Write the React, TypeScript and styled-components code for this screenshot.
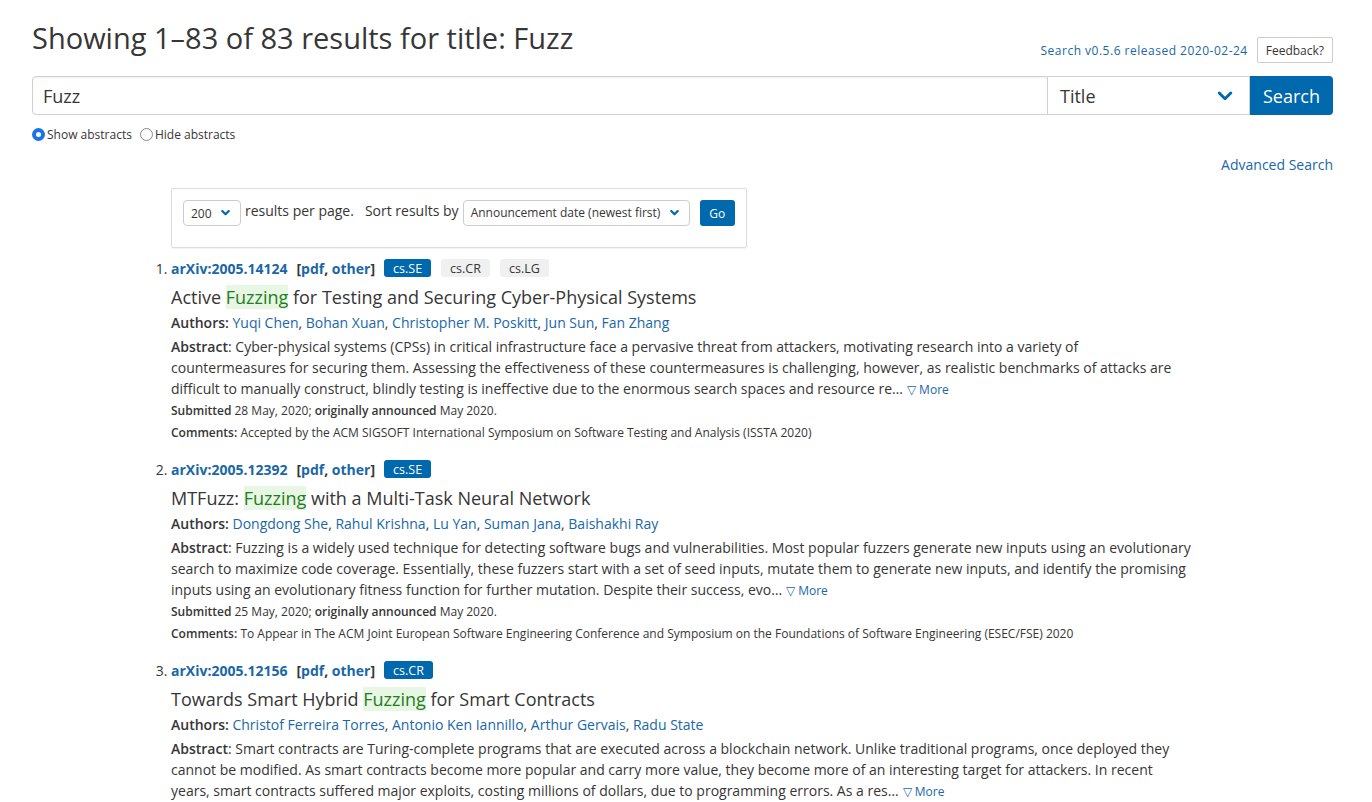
import React from 'react';
import styled, { createGlobalStyle } from 'styled-components';

const Global = createGlobalStyle`
  html, body {
    margin: 0;
    padding: 0;
    background: #fff;
  }
  body {
    font-family: "Open Sans", "Liberation Sans", sans-serif;
    color: #363636;
  }
`;

const BLUE = '#0068ac';
const LINK = '#1a67a8';

interface Tag {
  label: string;
  primary?: boolean;
}

interface Result {
  id: string;
  tags: Tag[];
  titleBefore: string;
  titleAfter: string;
  authors: string[];
  abstract: string;
  submitted: string;
  announced: string;
  comments: string;
}

const results: Result[] = [
  {
    id: '2005.14124',
    tags: [{ label: 'cs.SE', primary: true }, { label: 'cs.CR' }, { label: 'cs.LG' }],
    titleBefore: 'Active ',
    titleAfter: ' for Testing and Securing Cyber-Physical Systems',
    authors: ['Yuqi Chen', 'Bohan Xuan', 'Christopher M. Poskitt', 'Jun Sun', 'Fan Zhang'],
    abstract:
      'Cyber-physical systems (CPSs) in critical infrastructure face a pervasive threat from attackers, motivating research into a variety of countermeasures for securing them. Assessing the effectiveness of these countermeasures is challenging, however, as realistic benchmarks of attacks are difficult to manually construct, blindly testing is ineffective due to the enormous search spaces and resource re…',
    submitted: '28 May, 2020;',
    announced: 'May 2020.',
    comments: 'Accepted by the ACM SIGSOFT International Symposium on Software Testing and Analysis (ISSTA 2020)',
  },
  {
    id: '2005.12392',
    tags: [{ label: 'cs.SE', primary: true }],
    titleBefore: 'MTFuzz: ',
    titleAfter: ' with a Multi-Task Neural Network',
    authors: ['Dongdong She', 'Rahul Krishna', 'Lu Yan', 'Suman Jana', 'Baishakhi Ray'],
    abstract:
      'Fuzzing is a widely used technique for detecting software bugs and vulnerabilities. Most popular fuzzers generate new inputs using an evolutionary search to maximize code coverage. Essentially, these fuzzers start with a set of seed inputs, mutate them to generate new inputs, and identify the promising inputs using an evolutionary fitness function for further mutation. Despite their success, evo…',
    submitted: '25 May, 2020;',
    announced: 'May 2020.',
    comments:
      'To Appear in The ACM Joint European Software Engineering Conference and Symposium on the Foundations of Software Engineering (ESEC/FSE) 2020',
  },
  {
    id: '2005.12156',
    tags: [{ label: 'cs.CR', primary: true }],
    titleBefore: 'Towards Smart Hybrid ',
    titleAfter: ' for Smart Contracts',
    authors: ['Christof Ferreira Torres', 'Antonio Ken Iannillo', 'Arthur Gervais', 'Radu State'],
    abstract:
      'Smart contracts are Turing-complete programs that are executed across a blockchain network. Unlike traditional programs, once deployed they cannot be modified. As smart contracts become more popular and carry more value, they become more of an interesting target for attackers. In recent years, smart contracts suffered major exploits, costing millions of dollars, due to programming errors. As a res…',
    submitted: '',
    announced: '',
    comments: '',
  },
];

const Page = styled.div`
  padding: 18px 39px 0 32px;
`;

const Header = styled.header`
  display: flex;
  justify-content: space-between;
  align-items: flex-start;
`;

const Heading = styled.h1`
  margin: 0;
  font-size: 29px;
  line-height: 40px;
  font-weight: 400;
  color: #363636;
`;

const HeaderRight = styled.div`
  display: flex;
  align-items: center;
  gap: 9px;
  margin-top: 19px;
`;

const Version = styled.a`
  font-size: 12px;
  color: ${LINK};
  letter-spacing: 0.5px;
`;

const Feedback = styled.button`
  font-family: inherit;
  font-size: 12px;
  height: 26px;
  padding: 0 8px;
  background: #fff;
  color: #363636;
  border: 1px solid #ccc;
  border-radius: 2px;
`;

const SearchRow = styled.div`
  display: flex;
  margin-top: 13px;
  height: 39px;
`;

const SearchInput = styled.div`
  flex: 1;
  display: flex;
  align-items: center;
  padding-left: 10px;
  font-size: 18px;
  color: #363636;
  border: 1px solid #d0d0d0;
  border-radius: 4px 0 0 4px;
  box-shadow: inset 0 1px 2px rgba(0, 0, 0, 0.06);
`;

const FieldSelect = styled.div`
  width: 202px;
  box-sizing: border-box;
  display: flex;
  align-items: center;
  justify-content: space-between;
  padding: 0 16px 0 12px;
  font-size: 18px;
  border: 1px solid #d0d0d0;
  border-left: none;
`;

const SearchButton = styled.button`
  width: 83px;
  font-family: inherit;
  font-size: 18px;
  color: #fff;
  background: ${BLUE};
  border: none;
  border-radius: 0 4px 4px 0;
`;

const RadioRow = styled.div`
  display: flex;
  align-items: center;
  margin-top: 11px;
  font-size: 12px;
  color: #363636;
`;

const RadioLabel = styled.label`
  display: flex;
  align-items: center;
  gap: 2px;
  margin-right: 8px;
`;

const RadioDot = styled.span<{ $checked?: boolean }>`
  width: 13px;
  height: 13px;
  box-sizing: border-box;
  border-radius: 50%;
  border: ${(p) => (p.$checked ? '4px solid #1a73e8' : '1px solid #8a8a8a')};
  background: #fff;
`;

const AdvancedRow = styled.div`
  display: flex;
  justify-content: flex-end;
  margin-top: 12px;
  font-size: 14px;
  line-height: 20px;
`;

const Link = styled.a<{ $strong?: boolean }>`
  color: ${LINK};
  text-decoration: none;
  font-weight: ${(p) => (p.$strong ? 700 : 400)};
`;

const Content = styled.div`
  margin-left: 139px;
  width: 1022px;
`;

const ControlsBox = styled.div`
  margin-top: 13px;
  width: 576px;
  box-sizing: border-box;
  padding: 11px 11px 21px;
  border: 1px solid #dcdcdc;
  border-radius: 2px;
  box-shadow: 0 1px 2px rgba(0, 0, 0, 0.06);
  display: flex;
  align-items: flex-start;
  font-size: 14px;
  white-space: nowrap;
`;

const SmallSelect = styled.div<{ $width: number }>`
  width: ${(p) => p.$width}px;
  height: 26px;
  box-sizing: border-box;
  display: flex;
  align-items: center;
  justify-content: space-between;
  padding: 0 10px 0 7px;
  font-size: 12px;
  border: 1px solid #ccc;
  border-radius: 4px;
`;

const BoxText = styled.span<{ $gap: number }>`
  margin-left: ${(p) => p.$gap}px;
  line-height: 22px;
  flex-shrink: 0;
`;

const GoButton = styled.button`
  margin-left: 10px;
  width: 36px;
  height: 26px;
  font-family: inherit;
  font-size: 12px;
  color: #fff;
  background: ${BLUE};
  border: none;
  border-radius: 3px;
`;

const List = styled.ol`
  margin: 9px 0 0;
  padding: 0;
  list-style-position: outside;
  font-size: 14px;

  li::marker {
    color: #363636;
  }
`;

const Item = styled.li`
  margin-bottom: 14px;
`;

const ItemHead = styled.div`
  display: flex;
  align-items: center;
  height: 22px;
  font-weight: 700;
`;

const Bracket = styled.span`
  margin-left: 9px;
  margin-right: 9px;
`;

const TagChip = styled.span<{ $primary?: boolean }>`
  margin-right: 10px;
  height: 18px;
  padding: 0 9px;
  display: inline-flex;
  align-items: center;
  font-size: 12.5px;
  font-weight: 400;
  border-radius: 3px;
  color: ${(p) => (p.$primary ? '#fff' : '#363636')};
  background: ${(p) => (p.$primary ? BLUE : '#f0f0f0')};
`;

const Title = styled.p`
  margin: 6px 0 0;
  font-size: 18px;
  line-height: 24px;
  color: #363636;
`;

const Highlight = styled.span`
  background: #e8f6e4;
  color: #1f7d22;
`;

const Authors = styled.p`
  margin: 3px 0 0;
  line-height: 21px;
`;

const Label = styled.span`
  font-weight: 600;
`;

const Abstract = styled.p`
  margin: 3px 0 0;
  line-height: 21px;
`;

const More = styled.a`
  font-size: 12px;
  color: ${LINK};
  margin-left: 4px;
`;

const Meta = styled.p`
  margin: 0;
  font-size: 12px;
  line-height: 22px;
`;

function Chevron ({ size = 16, stroke = 3 }: { size?: number; stroke?: number }) {
  return (
    <svg width={size} height={size * 0.6} viewBox='0 0 16 10'>
      <polyline
        fill='none'
        points='2,2 8,8 14,2'
        stroke={BLUE}
        strokeLinecap='round'
        strokeLinejoin='round'
        strokeWidth={stroke}
      />
    </svg>
  );
}

function ResultItem ({ r }: { r: Result }) {
  return (
    <Item>
      <ItemHead>
        <Link $strong>arXiv:{r.id}</Link>
        <Bracket>
          [<Link $strong>pdf</Link>, <Link $strong>other</Link>]
        </Bracket>
        {r.tags.map((t) => (
          <TagChip $primary={t.primary} key={t.label}>{t.label}</TagChip>
        ))}
      </ItemHead>
      <Title>
        {r.titleBefore}
        <Highlight>Fuzzing</Highlight>
        {r.titleAfter}
      </Title>
      <Authors>
        <Label>Authors:</Label>{' '}
        {r.authors.map((a, i) => (
          <React.Fragment key={a}>
            <Link>{a}</Link>
            {i < r.authors.length - 1 ? ', ' : ''}
          </React.Fragment>
        ))}
      </Authors>
      <Abstract>
        <Label>Abstract</Label>: {r.abstract}
        <More>▽ More</More>
      </Abstract>
      {r.submitted && (
        <Meta>
          <Label>Submitted</Label> {r.submitted} <Label>originally announced</Label> {r.announced}
        </Meta>
      )}
      {r.comments && (
        <Meta>
          <Label>Comments:</Label> {r.comments}
        </Meta>
      )}
    </Item>
  );
}

export default function App () {
  return (
    <>
      <Global />
      <Page>
        <Header>
          <Heading>Showing 1–83 of 83 results for title: Fuzz</Heading>
          <HeaderRight>
            <Version>Search v0.5.6 released 2020-02-24</Version>
            <Feedback>Feedback?</Feedback>
          </HeaderRight>
        </Header>
        <SearchRow>
          <SearchInput>Fuzz</SearchInput>
          <FieldSelect>
            Title
            <Chevron />
          </FieldSelect>
          <SearchButton>Search</SearchButton>
        </SearchRow>
        <RadioRow>
          <RadioLabel>
            <RadioDot $checked />
            Show abstracts
          </RadioLabel>
          <RadioLabel>
            <RadioDot />
            Hide abstracts
          </RadioLabel>
        </RadioRow>
        <AdvancedRow>
          <Link>Advanced Search</Link>
        </AdvancedRow>
        <Content>
          <ControlsBox>
            <SmallSelect $width={59}>
              200
              <Chevron size={9} stroke={4} />
            </SmallSelect>
            <BoxText $gap={4}>results per page.</BoxText>
            <BoxText $gap={11}>Sort results by</BoxText>
            <BoxText $gap={4} as='div'>
              <SmallSelect $width={227}>
                Announcement date (newest first)
                <Chevron size={9} stroke={4} />
              </SmallSelect>
            </BoxText>
            <GoButton>Go</GoButton>
          </ControlsBox>
          <List>
            {results.map((r) => (
              <ResultItem key={r.id} r={r} />
            ))}
          </List>
        </Content>
      </Page>
    </>
  );
}
